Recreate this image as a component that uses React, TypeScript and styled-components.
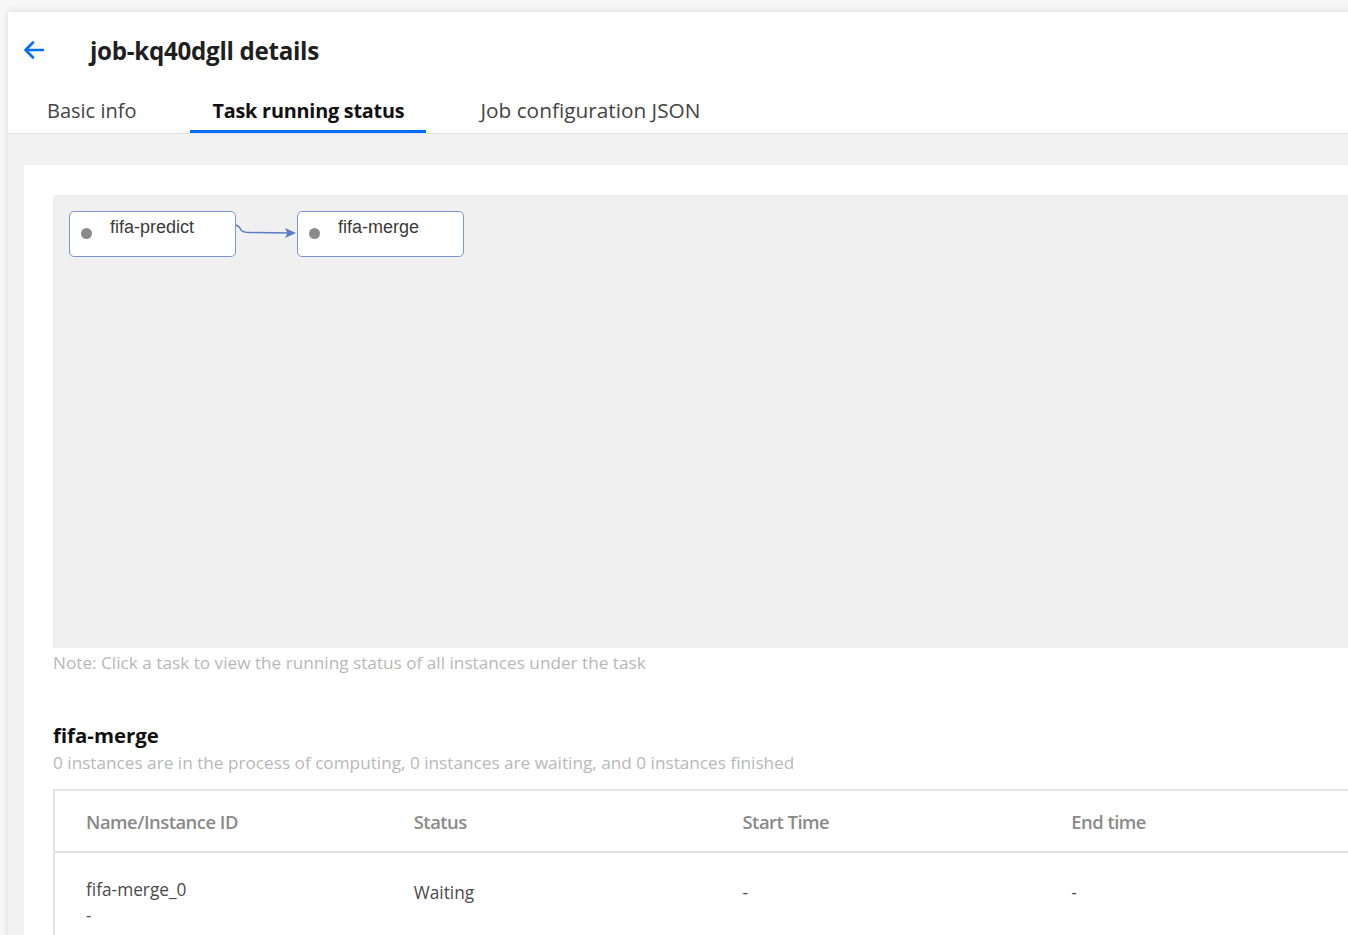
import React from "react";
import styled, { createGlobalStyle } from "styled-components";

const GlobalStyle = createGlobalStyle`
  html, body {
    margin: 0;
    padding: 0;
    background: #f7f7f7;
    overflow: hidden;
  }
  body {
    font-family: "Open Sans", "Noto Sans", sans-serif;
  }
`;

const Window = styled.div`
  margin: 12px 0 0 8px;
  width: 1400px;
  height: 940px;
  background: #f1f1f1;
  box-shadow: 0 0 8px rgba(0, 0, 0, 0.12);
  display: flex;
  flex-direction: column;
`;

const Header = styled.div`
  background: #fff;
  border-bottom: 1px solid #e2e2e2;
`;

const TitleRow = styled.div`
  height: 76px;
  display: flex;
  align-items: center;
  padding-left: 16px;
  gap: 46px;
  h1 {
    margin: 0;
    font-size: 24.2px;
    font-weight: 700;
    color: #1f1f1f;
    letter-spacing: -0.3px;
  }
`;

const BackButton = styled.button`
  border: 0;
  background: none;
  padding: 0;
  width: 20px;
  height: 20px;
  display: flex;
  align-items: center;
  justify-content: center;
  cursor: pointer;
`;

const Tabs = styled.div`
  display: flex;
  gap: 32px;
  padding-left: 17px;
  height: 45px;
`;

const Tab = styled.div<{ $active?: boolean; $size?: number }>`
  padding: 0 22px;
  display: flex;
  align-items: center;
  font-size: ${({ $size }) => $size ?? 20}px;
  font-weight: ${({ $active }) => ($active ? 700 : 400)};
  color: ${({ $active }) => ($active ? "#111" : "#444")};
  border-bottom: 3px solid ${({ $active }) => ($active ? "#006eff" : "transparent")};
  box-sizing: border-box;
  padding-top: 2px;
  letter-spacing: ${({ $active }) => ($active ? "-0.2px" : "0")};
`;

const Body = styled.div`
  padding: 31px 0 0 16px;
`;

const Card = styled.div`
  background: #fff;
  padding: 30px 0 0 29px;
  height: 900px;
`;

const Canvas = styled.div`
  position: relative;
  height: 453px;
  background: #f0f0f0;
`;

const Node = styled.div<{ $x: number; $y: number }>`
  position: absolute;
  left: ${({ $x }) => $x}px;
  top: ${({ $y }) => $y}px;
  width: 167px;
  height: 46px;
  box-sizing: border-box;
  border: 1.5px solid #7b96cf;
  border-radius: 5px;
  background: #fff;
  font-family: "Liberation Sans", Arial, sans-serif;
  font-size: 18px;
  color: #3b3b3b;
`;

const NodeDot = styled.span`
  position: absolute;
  left: 11px;
  top: 16px;
  width: 11px;
  height: 11px;
  border-radius: 50%;
  background: #8a8a8a;
`;

const NodeLabel = styled.span`
  position: absolute;
  left: 40px;
  top: 5px;
`;

const Edge = styled.svg`
  position: absolute;
  left: 182px;
  top: 26px;
  overflow: visible;
`;

const Note = styled.p`
  margin: 4px 0 0;
  font-size: 17.2px;
  color: #b8b8b8;
  line-height: 22px;
`;

const TaskTitle = styled.h3`
  margin: 48px 0 0;
  font-size: 20.4px;
  font-weight: 700;
  color: #111;
  line-height: 26px;
`;

const TaskSummary = styled.p`
  margin: 4px 0 0;
  font-size: 17.2px;
  color: #b8b8b8;
  line-height: 22px;
`;

const Table = styled.table`
  margin-top: 15px;
  border-collapse: collapse;
  width: 1316px;
  border-top: 2px solid #e3e3e3;
  border-left: 2px solid #e3e3e3;
  table-layout: fixed;
`;

const Th = styled.th`
  height: 60px;
  padding: 0 0 0 31px;
  text-align: left;
  font-size: 18.4px;
  font-weight: 600;
  color: #8a8a8a;
  border-bottom: 2px solid #e3e3e3;
  letter-spacing: -0.5px;
`;

const Td = styled.td`
  padding: 24px 0 12px 31px;
  font-size: 17.3px;
  color: #4a4a4a;
  vertical-align: top;
  line-height: 26px;
`;

const CellMid = styled(Td)`
  padding-top: 27px;
`;

const SubId = styled.div`
  color: #555;
`;

const columns = ["Name/Instance ID", "Status", "Start Time", "End time"];

const App = () => {
  return (
    <>
      <GlobalStyle />
      <Window>
        <Header>
          <TitleRow>
            <BackButton type="button" aria-label="back">
              <svg width="20" height="18" viewBox="0 0 20 18" fill="none">
                <path
                  d="M19 9H2M9 1.5L1.5 9L9 16.5"
                  stroke="#006eff"
                  strokeWidth="2.6"
                  strokeLinecap="round"
                  strokeLinejoin="round"
                />
              </svg>
            </BackButton>
            <h1>job-kq40dgll details</h1>
          </TitleRow>
          <Tabs>
            <Tab>Basic info</Tab>
            <Tab $active $size={19.8}>Task running status</Tab>
            <Tab $size={20.8}>Job configuration JSON</Tab>
          </Tabs>
        </Header>
        <Body>
          <Card>
            <Canvas>
              {/* dependency edge: fifa-predict -> fifa-merge */}
              <Edge width="64" height="16" viewBox="0 0 64 16">
                <path d="M0 4 C4 4 4 6 6 9 C8 11 10 11.5 14 11.5 L54 12" stroke="#5a7cc4" strokeWidth="1.4" fill="none" />
                <path d="M50 7 L61 12 L50 17 L52.5 12 Z" fill="#5a7cc4" />
              </Edge>
              <Node $x={16} $y={16}>
                <NodeDot />
                <NodeLabel>fifa-predict</NodeLabel>
              </Node>
              <Node $x={244} $y={16}>
                <NodeDot />
                <NodeLabel>fifa-merge</NodeLabel>
              </Node>
            </Canvas>
            <Note>Note: Click a task to view the running status of all instances under the task</Note>
            <TaskTitle>fifa-merge</TaskTitle>
            <TaskSummary>
              0 instances are in the process of computing, 0 instances are waiting, and 0 instances finished
            </TaskSummary>
            <Table>
              <thead>
                <tr>
                  {columns.map((c) => (
                    <Th key={c}>{c}</Th>
                  ))}
                </tr>
              </thead>
              <tbody>
                <tr>
                  <Td>
                    fifa-merge_0
                    <SubId>-</SubId>
                  </Td>
                  <CellMid>Waiting</CellMid>
                  <CellMid>-</CellMid>
                  <CellMid>-</CellMid>
                </tr>
              </tbody>
            </Table>
          </Card>
        </Body>
      </Window>
    </>
  );
};

export default App;
